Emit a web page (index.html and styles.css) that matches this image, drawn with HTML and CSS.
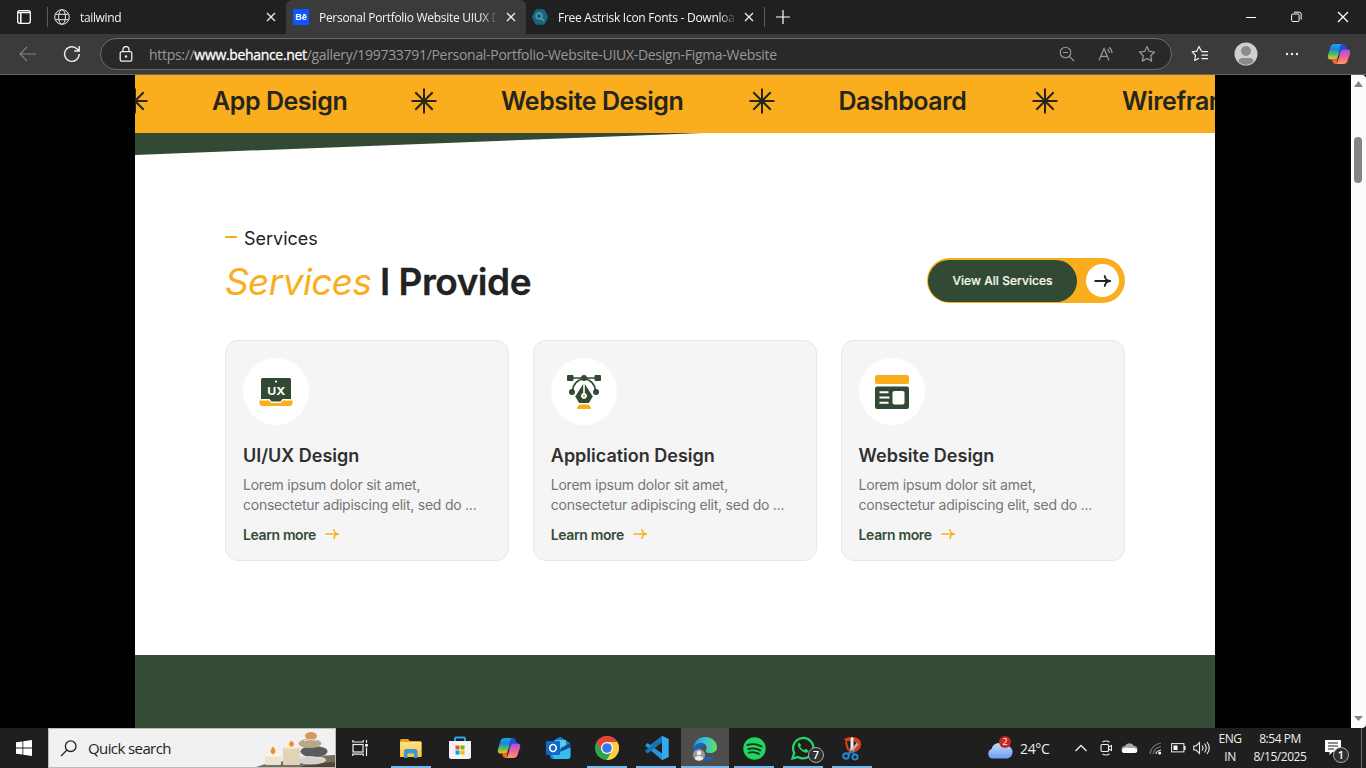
FILE: index.html
```html
<!DOCTYPE html>
<html lang="en">
<head>
<meta charset="utf-8">
<title>Personal Portfolio Website UIUX Design</title>
<link rel="stylesheet" href="styles.css">
</head>
<body>
<svg width="0" height="0" class="defs">
  <defs>
    <linearGradient id="cpA" x1="0" y1="0" x2="0" y2="1"><stop offset="0" stop-color="#1aa5f0"/><stop offset=".35" stop-color="#1b86d8"/><stop offset=".65" stop-color="#52b86a"/><stop offset="1" stop-color="#f5c51b"/></linearGradient>
    <linearGradient id="cpB" x1="0" y1="0" x2="0" y2="1"><stop offset="0" stop-color="#a44ff0"/><stop offset=".5" stop-color="#ee5f9b"/><stop offset="1" stop-color="#ff9a5c"/></linearGradient>
    <linearGradient id="edgeG" x1="0" y1="0" x2="1" y2="0"><stop offset="0" stop-color="#2392dd"/><stop offset=".5" stop-color="#35c1df"/><stop offset="1" stop-color="#6be04f"/></linearGradient>
    <linearGradient id="cloudG" x1="0" y1="0" x2="0" y2="1"><stop offset="0" stop-color="#c3dcff"/><stop offset="1" stop-color="#6c9df0"/></linearGradient>
    <linearGradient id="folderG" x1="0" y1="0" x2="0" y2="1"><stop offset="0" stop-color="#ffe08a"/><stop offset="1" stop-color="#fcc537"/></linearGradient>
    <symbol id="x" viewBox="0 0 10 10"><path d="M1 1l8 8M9 1L1 9" stroke="#eee" stroke-width="1.3" fill="none"/></symbol>
    <symbol id="copilot" viewBox="0 0 24 24">
      <path d="M15 2.5h1.5c1.2 0 1.8.8 2.1 1.8l.9 3h-4z" fill="#1747c4"/>
      <path d="M7.5 2h8.3c-1 .5-1.5 1.7-1.9 3l-3 9.500c-.6 2-1.500 3-3.400 3H3.300C1 17.500.4 15.500 1 13.300L3.500 5C4.100 3 5.500 2 7.500 2z" fill="url(#cpA)"/>
      <path d="M14 2h2c1.800 0 2.500 1.300 3 3l.8 2.600h-3c-1.800 0-2.600.7-3.100 2.400L12 15c-.6-3 .1-6 .6-8z" fill="#1d4fd0"/>
      <path d="M5 17.500h3.800c1.200-.5 1.800-1.500 2.300-3L10 19c-.4 1.900-.3 3 1 3H8.500c-1.500 0-2.500-1-3-2.800z" fill="#f06a2a"/>
      <path d="M16.500 7.500h4.200c2.300 0 2.900 2 2.300 4L20.500 19c-.6 2-2 3-4 3H9c1-.5 1.500-1.600 1.900-3l2.500-8.500c.6-2 1.500-3 3.100-3z" fill="url(#cpB)"/>
    </symbol>
    <symbol id="star" viewBox="0 0 26 26"><path d="M13 0.500V25.500M0.500 13H25.500M4.300 4.300L21.700 21.700M21.700 4.300L4.300 21.700" stroke="#26251c" stroke-width="2" fill="none"/></symbol>
    <symbol id="arrow" viewBox="0 0 16 12"><path d="M.5 6H15M9.500.8C9.500 3.500 11.500 6 15 6C11.500 6 9.500 8.500 9.500 11.200" stroke="currentColor" stroke-width="1.700" fill="none"/></symbol>
  </defs>
</svg>

<header class="tabs">
  <div class="tab-tools"><svg width="16" height="16" viewBox="0 0 16 16"><rect x="1.700" y="1.700" width="12.600" height="12.600" rx="2" fill="none" stroke="#fff" stroke-width="1.300"/><path d="M2 3.400h12M4.800 4v10" stroke="#fff" stroke-width="1.500"/></svg></div>
  <div class="tab">
    <svg class="fav" width="16" height="16" viewBox="0 0 16 16" fill="none" stroke="#e8e8e8"><circle cx="8" cy="8" r="7.300"/><ellipse cx="8" cy="8" rx="3.400" ry="7.300"/><path d="M1.500 5.300h13M1.500 10.700h13"/></svg>
    <span class="tab-title t1">tailwind</span>
    <svg width="10" height="10"><use href="#x"/></svg>
  </div>
  <div class="tab active">
    <span class="fav behance">Bē</span>
    <span class="tab-title t2">Personal Portfolio Website UIUX D</span>
    <svg width="10" height="10"><use href="#x"/></svg>
  </div>
  <div class="tab">
    <svg class="fav" width="16" height="16" viewBox="0 0 16 16"><path d="M4 .8h8l3.800 7.200L12 15.200H4L.2 8z" fill="#16677d" stroke="#16677d" stroke-linejoin="round"/><circle cx="7" cy="7" r="3" fill="none" stroke="#60a0ad" stroke-width="1.300"/><path d="M9.300 9.300l3 3" stroke="#60a0ad" stroke-width="1.500"/></svg>
    <span class="tab-title t3">Free Astrisk Icon Fonts - Downloa</span>
    <svg width="10" height="10"><use href="#x"/></svg>
  </div>
  <div class="new-tab"><svg width="14" height="14"><path d="M7 0v14M0 7h14" stroke="#fff" stroke-width="1.200"/></svg></div>
  <div class="window-controls">
    <svg width="10" height="12"><path d="M0 6.500h10" stroke="#fff"/></svg>
    <svg width="11" height="12" fill="none" stroke="#fff"><rect x=".6" y="3" width="7.500" height="7.500" rx="1.200"/><path d="M3 1.200h5.200q2 0 2 2V8.500"/></svg>
    <svg width="12" height="12"><path d="M1 1l10 10M11 1L1 11" stroke="#fff" stroke-width="1.300"/></svg>
  </div>
</header>

<nav class="toolbar">
  <svg class="back" width="18" height="16" fill="none" stroke="#818181" stroke-width="1.100"><path d="M17 8H1M8 1L1 8l7 7"/></svg>
  <svg class="reload" width="18" height="18" fill="none" stroke="#eee" stroke-width="1.400"><path d="M16.200 9A7.300 7.300 0 1 1 14.200 4L16 5.800M16.200 1v5h-5"/></svg>
  <div class="address">
    <svg width="14" height="16" fill="none" stroke="#eee" stroke-width="1.300"><rect x="1.200" y="5.700" width="11.600" height="9.500" rx="1.600"/><path d="M4 5.500V3.500a3 3 0 0 1 6 0v2"/><circle cx="7" cy="10.500" r=".6" fill="#fff"/></svg>
    <span class="url">https://<b>www.behance.net</b>/gallery/199733791/Personal-Portfolio-Website-UIUX-Design-Figma-Website</span>
    <div class="address-actions">
      <svg width="16" height="16" fill="none" stroke="#9a9a9a" stroke-width="1.100"><circle cx="6.500" cy="6.500" r="5.300"/><path d="M10.500 10.500L15 15M4 6.500h5"/></svg>
      <svg width="17" height="16" fill="none" stroke="#9a9a9a" stroke-width="1.200"><path d="M1 14.500L6 2.500l5 12M2.800 10.300h6.400M9.500 3q1.800 1.300 1.800 4M11 1.200q3 1.800 3 5.800"/></svg>
      <svg width="18" height="18" fill="none" stroke="#9a9a9a" stroke-width="1.200" stroke-linejoin="round"><path d="M9 1.500l2.300 4.900 5.300.7-3.900 3.700 1 5.300L9 13.500l-4.700 2.600 1-5.300L1.400 7.100l5.300-.7z"/></svg>
    </div>
  </div>
  <svg class="favorites" width="18" height="18" fill="none" stroke="#f2f2f2" stroke-width="1.200" stroke-linejoin="round"><path d="M10.500 6.300L8 1.500 5.800 6.200l-4.600.6 3.300 3.500-.8 5.200L8 13.200M10.500 6.700H17M10.500 10.200H17M10.500 13.700H17"/></svg>
  <svg class="profile" width="24" height="24"><circle cx="12" cy="12" r="11.500" fill="#d2d0ce"/><circle cx="12" cy="9" r="5" fill="#8d8b89"/><path d="M4.500 20q0-4 4-4h7q4 0 4 4-7.500 6-15 0z" fill="#8d8b89"/></svg>
  <svg class="more" width="14" height="4" fill="#eee"><circle cx="2" cy="2" r="1.200"/><circle cx="7" cy="2" r="1.200"/><circle cx="12" cy="2" r="1.200"/></svg>
  <svg class="cop" width="24" height="24"><use href="#copilot"/></svg>
</nav>

<main class="viewport">
  <div class="page">
    <div class="marquee">
      <svg width="26" height="26"><use href="#star"/></svg>
      <span class="m1">App Design</span>
      <svg width="26" height="26"><use href="#star"/></svg>
      <span class="m2">Website Design</span>
      <svg width="26" height="26"><use href="#star"/></svg>
      <span class="m3">Dashboard</span>
      <svg width="26" height="26"><use href="#star"/></svg>
      <span class="m4">Wirefram</span>
    </div>
    <svg class="slant" width="1080" height="24"><path d="M0 0H568L0 22z" fill="#324a33"/></svg>
    <section class="services">
      <div class="eyebrow"><i></i><span>Services</span></div>
      <div class="heading-row">
        <h1><em>Services</em><span>I Provide</span></h1>
        <div class="cta">
          <span class="cta-label">View All Services</span>
          <span class="cta-arrow"><svg width="18" height="14" viewBox="0 0 16 12"><use href="#arrow"/></svg></span>
        </div>
      </div>
      <div class="cards">
        <article class="card">
          <div class="icon"><svg width="34" height="34"><path d="M3.500 3h27q1.500 0 1.500 1.500V24h-8.500l-2 2.500h-9L10.500 24H2V4.500Q2 3 3.500 3z" fill="#324a33"/><circle cx="17" cy="6.600" r="1.100" fill="#fff"/><text x="17.300" y="20" class="ux" text-anchor="middle" textLength="18" lengthAdjust="spacingAndGlyphs">UX</text><path d="M.5 25.500h9.700l2 2.500h9.600l2-2.500h9.700v2.500q0 3-3 3h-27q-3 0-3-3z" fill="#fbae1d"/></svg></div>
          <h2>UI/UX Design</h2>
          <p><span>Lorem ipsum dolor sit amet,</span><br><span>consectetur adipiscing elit, sed do ...</span></p>
          <div class="more-link"><span>Learn more</span><svg width="15" height="12"><use href="#arrow"/></svg></div>
        </article>
        <article class="card">
          <div class="icon"><svg width="34" height="34"><g fill="#324a33"><rect x="0" y="0" width="6.500" height="6" rx="1"/><rect x="27.500" y="0" width="6.500" height="6" rx="1"/><circle cx="17" cy="3" r="3"/><circle cx="5" cy="17" r="3"/><circle cx="29" cy="17" r="3"/><path d="M16.200 9v9a3 3 0 1 0 1.600 0V9l8 12.500-4 6.500h-9.600l-4-6.500z"/></g><path d="M5 3h24M5.500 16C6 9 11 4 17 4s11 5 11.500 12" stroke="#324a33" stroke-width="1.600" fill="none"/><circle cx="17" cy="21" r="1.200" fill="#fbae1d"/><path d="M12.500 30h9q1.500 1 2 3.500h-13q.5-2.500 2-3.500z" fill="#fbae1d" stroke="#fbae1d" stroke-linejoin="round"/></svg></div>
          <h2>Application Design</h2>
          <p><span>Lorem ipsum dolor sit amet,</span><br><span>consectetur adipiscing elit, sed do ...</span></p>
          <div class="more-link"><span>Learn more</span><svg width="15" height="12"><use href="#arrow"/></svg></div>
        </article>
        <article class="card">
          <div class="icon"><svg width="34" height="34"><rect width="34" height="9" rx="2" fill="#fbae1d"/><rect y="11.500" width="34" height="22.500" rx="2" fill="#324a33"/><rect x="17.500" y="16" width="12" height="13.500" rx="2" fill="#fff"/><path d="M4.500 17.300h9M4.500 22.500h10M4.500 27.700h9" stroke="#fff" stroke-width="1.900"/></svg></div>
          <h2>Website Design</h2>
          <p><span>Lorem ipsum dolor sit amet,</span><br><span>consectetur adipiscing elit, sed do ...</span></p>
          <div class="more-link"><span>Learn more</span><svg width="15" height="12"><use href="#arrow"/></svg></div>
        </article>
      </div>
    </section>
    <div class="green-band"></div>
  </div>
  <div class="scrollbar">
    <svg width="9" height="6"><path d="M4.500 0L9 6H0z" fill="#858585"/></svg>
    <i></i>
    <svg width="9" height="5"><path d="M0 0h9L4.500 5z" fill="#858585"/></svg>
  </div>
</main>

<footer class="taskbar">
  <div class="start"><svg width="16" height="16" fill="#fff"><path d="M0 2.300l6.500-.9v6.200H0zM7.300 1.300L16 0v7.600H7.300zM0 8.400h6.500v6.200L0 13.700zM7.300 8.400H16V16l-8.700-1.200z"/></svg></div>
  <div class="search">
    <svg width="17" height="17" fill="none" stroke="#222" stroke-width="1.300"><circle cx="10.700" cy="6.200" r="5.300"/><path d="M7 10L1 16"/></svg>
    <span>Quick search</span>
    <svg class="stones" width="80" height="38">
      <path d="M1 38Q14 33 30 32T61 27L80 26V38z" fill="#77705f"/><path d="M44 38Q58 34 80 33v5z" fill="#514535"/>
      <rect x="28" y="18" width="17" height="18" rx="1" fill="#e2d3b8"/><rect x="10" y="26" width="16" height="10" rx="1" fill="#eee2cb"/><ellipse cx="36.500" cy="18.500" rx="8" ry="1.500" fill="#f6ebd5"/><ellipse cx="18" cy="26.500" rx="8" ry="1.500" fill="#fff4df"/>
      <path d="M36.500 11.500q5 4.500 0 6.500-5-2 0-6.500M18 17.500q5 5.500 0 8-5-2.500 0-8" fill="#f28a2e"/>
      <ellipse cx="56" cy="31" rx="15" ry="4.500" fill="#d3d0cd"/><ellipse cx="59" cy="22.500" rx="13.500" ry="5.500" fill="#5b5b5d"/><ellipse cx="55" cy="14.500" rx="11.500" ry="4.500" fill="#b8a88b"/><ellipse cx="56" cy="7" rx="6" ry="4" fill="#d49a5b"/>
      <path d="M49 12q8-3 13 0M43 29q12-3 23 0" stroke="#eee2cf" fill="none"/>
    </svg>
  </div>
  <div class="app taskview"><svg width="17" height="16" fill="none" stroke="#eee" stroke-width="1.200"><rect x="1" y="4.500" width="10" height="7.500"/><path d="M.8 0v2h10.400V0M.8 16v-1.800h10.400V16M14.500 0v3M14.500 7.500V16"/><rect x="13.200" y="4" width="2.600" height="2.600" fill="#fff" stroke="none"/></svg></div>
  <div class="app open"><svg width="24" height="24"><path d="M1 4.500Q1 3 2.500 3H9l2 2h10q1.500 0 1.500 1.500V21h-21z" fill="#e8a412"/><path d="M1 6h21.500v13.500q0 1.500-1.500 1.500H1z" fill="url(#folderG)"/><path d="M5 22v-6.500Q5 13 7.500 13h8.500q2.500 0 2.500 2.500V22H15v-4.500H8.500V22z" fill="#3996d8"/></svg></div>
  <div class="app"><svg width="24" height="24"><path d="M7 6V2.500Q7 1.500 8 1.500h8q1 0 1 1V6" fill="none" stroke="#27a9e8" stroke-width="2"/><path d="M1 5h22v15.500q0 2.500-2.500 2.500h-17Q1 23 1 20.500z" fill="#f3f3f3"/><path d="M7.500 9.500h4v4h-4z" fill="#f25022"/><path d="M12.500 9.500h4v4h-4z" fill="#7fba00"/><path d="M7.500 14.500h4v4h-4z" fill="#00a4ef"/><path d="M12.500 14.500h4v4h-4z" fill="#ffb900"/></svg></div>
  <div class="app"><svg width="24" height="24"><use href="#copilot"/></svg></div>
  <div class="app"><svg width="25" height="24"><path d="M4 7L14 .8 24 7v13q0 3-3 3H7q-3 0-3-3z" fill="#1482d4"/><path d="M9 4h11v12H9z" fill="#5ac5ef"/><path d="M15 12l9.500-5v13q0 3-3 3H11z" fill="#134b9b"/><path d="M6 19l18.500-7.500V20q0 3-3 3H8z" fill="#35bdf0"/><rect x="0" y="5" width="14" height="14" rx="1" fill="#0f69c9"/><ellipse cx="7" cy="12" rx="3.200" ry="3.500" fill="none" stroke="#fff" stroke-width="1.700"/></svg></div>
  <div class="app open"><svg width="24" height="24"><circle cx="12" cy="12" r="12" fill="#2da44e"/><path d="M1.600 6A12 12 0 0 1 22.400 6H12L7 15z" fill="#ea4335"/><path d="M12 6h10.400A12 12 0 0 1 11.500 24L17 15z" fill="#ffcd42"/><circle cx="12" cy="12" r="6" fill="#fff"/><circle cx="12" cy="12" r="4.800" fill="#3778e8"/></svg></div>
  <div class="app open"><svg width="25" height="24"><path d="M18 0l6.500 3v18L18 24 1 9.500 3.500 7l3 2z" fill="#2596dc"/><path d="M18 0L1 15l2.500 2.500L18 6.500z" fill="#1474b8"/><path d="M18 6.500v11L10.500 12z" fill="#202020"/><path d="M18 0l6.500 3v18L18 24z" fill="#35a9ef"/></svg></div>
  <div class="app open current"><svg width="26" height="25"><path d="M1 14C2 5 7 1 13 1c7 0 12 5 12 10 0 4-3 6-7 6-3 0-5-1-4-3 2-4-1-7-5-7-4 0-7 3-8 7z" fill="url(#edgeG)"/><path d="M1 13c2-5 8-7 11-4-4 2-4 8 0 11 3 2 7 2 11-1-2 4-6 6-10 6C6 25 1 20 1 13z" fill="#1466b2"/><circle cx="7" cy="19" r="6" fill="#999"/><circle cx="7" cy="17" r="2.300" fill="#eee"/><path d="M3 23q0-3 4-3t4 3q-4 3-8 0z" fill="#eee"/></svg></div>
  <div class="app open"><svg width="23" height="23"><circle cx="11.500" cy="11.500" r="11.200" fill="#1ed760"/><path d="M4.500 8q7-2.200 14 1.300M5.300 12q6-1.800 12 1.300M6 15.700q5-1.500 10 1.200" fill="none" stroke="#1d2b21" stroke-width="1.900" stroke-linecap="round"/></svg></div>
  <div class="app open whatsapp"><svg width="24" height="24"><path d="M1.500 22.500l1.700-5.700A10.200 10.200 0 1 1 7 20.900z" fill="none" stroke="#25d366" stroke-width="2.300"/><path d="M8 6.500c-3 2 0 6 3 8.500 3 2.300 6 2.500 6.500-.5l-3-1.700-1.500 1.500c-2-1-3-2.200-3.800-3.800l1-1.500z" fill="#25d366"/></svg><b class="badge">7</b></div>
  <div class="app open"><svg width="22" height="25"><path d="M3 3C8-.5 19 0 20 7c.5 5-3 9-8 9l-5-1 1.500-3C14 13 16 10 15 7 13 3.500 8 4 5 6z" fill="#d84316"/><path d="M5 6l2 8" stroke="#d84316" stroke-width="2"/><path d="M10.500 1l2 1v15h-3V3z" fill="#eee"/><path d="M16.500 7.500L8 18" stroke="#b8b8b8" stroke-width="2.400"/><path d="M11 15l-4 4M11 15l3 4" stroke="#1a77bd" stroke-width="2"/><circle cx="5" cy="20" r="2.800" fill="none" stroke="#2587cf" stroke-width="2"/><circle cx="14" cy="21" r="2.600" fill="none" stroke="#2587cf" stroke-width="2"/></svg></div>
  <div class="weather"><svg width="26" height="24"><path d="M5 22.500a5 5 0 0 1-.5-9.500A8 8 0 0 1 18 9.500a6.500 6.500 0 0 1 2 13z" fill="url(#cloudG)"/></svg><b class="alert">2</b><span>24°C</span></div>
  <div class="tray">
    <svg class="chev" width="12" height="8"><path d="M.5 7L6 1.500 11.500 7" fill="none" stroke="#eee" stroke-width="1.300"/></svg>
    <svg class="cam" width="12" height="16" fill="none" stroke="#eee" stroke-width="1.100"><rect x="1" y="4.500" width="7.500" height="7" rx="1"/><path d="M8.500 7l3-1.500v5l-3-1.500M2.500 2q3.500-2 7 0M2.500 14q3.500 2 7 0"/></svg>
    <svg class="cloud" width="17" height="12"><path d="M4 11a3.500 3.500 0 0 1 0-7A5 5 0 0 1 13 4a3.500 3.500 0 0 1 0 7z" fill="#aaa"/><path d="M1 9q1-4 6-3l6 0q4 1 3 4-1 1-3 1H4Q1 11 1 9z" fill="#fff"/></svg>
    <svg class="wifi" width="13" height="13" fill="none" stroke="#777" stroke-width="1.200"><path d="M1 12Q2 3 12 1M4 12q1-6 8-7.500"/><path d="M7 12q0-3 5-4" stroke="#ddd"/><circle cx="10.700" cy="11" r="1.500" fill="#fff" stroke="none"/></svg>
    <svg class="battery" width="15" height="10"><rect x=".6" y=".6" width="12.300" height="8.300" fill="none" stroke="#eee"/><rect x="2.500" y="2.500" width="4" height="4.500" fill="#fff"/><path d="M13.800 3v4" stroke="#eee" stroke-width="1.500"/></svg>
    <svg class="sound" width="17" height="14" fill="none" stroke="#eee" stroke-width="1.100"><path d="M.8 5H3l3.500-3.500v11L3 9H.8zM9 4.500q2 2.500 0 5M11.500 2.500q3.500 4.500 0 9M14 1q4.500 6 0 12"/></svg>
  </div>
  <div class="lang"><span>ENG</span><span>IN</span></div>
  <div class="clock"><span>8:54 PM</span><span>8/15/2025</span></div>
  <div class="notify"><svg width="17" height="15"><path d="M0 0h16v12H7.500L4.500 15v-3H0z" fill="#fff"/><path d="M3 3h10M3 6h10M3 9h6" stroke="#222"/></svg><b class="badge">1</b></div>
</footer>
</body>
</html>
```
FILE: styles.css
```css
* { box-sizing: border-box; }
body {
  margin: 0; width: 1366px; height: 768px; overflow: hidden;
  display: flex; flex-direction: column; background: #000;
  font-family: "Open Sans", "Noto Sans", sans-serif;
}
.defs { position: absolute; }
svg { display: block; flex: none; }
span { white-space: nowrap; }

/* Tab strip */
.tabs { height: 34px; flex: none; display: flex; background: #202020; color: #f4f4f4; font-size: 12px; }
.tab-tools { width: 48px; height: 20px; margin-top: 7px; padding: 2px 16px; border-right: 1px solid #5c5c5c; }
.tab { width: 238px; display: flex; align-items: center; padding: 0 10px 0 6px; }
.tab.active { width: 240px; background: #3b3b3b; border-radius: 6px 6px 0 0; padding: 0 10px 0 7px; }
.fav { width: 16px; height: 16px; flex: none; }
.behance { background: #0a57ff; color: #fff; font: bold 9px/16px "Liberation Sans", sans-serif; text-align: center; }
.tab-title { width: 179px; margin: 0 auto 0 10px; overflow: hidden; -webkit-mask-image: linear-gradient(90deg, #000 90%, transparent); line-height: 18px; padding-top: 1px; }
.t2 { letter-spacing: -.3px; }
.t3 { letter-spacing: -.27px; }
.t1 { letter-spacing: -.35px; }
.new-tab { width: 38px; height: 20px; margin-top: 7px; padding: 3px 11px; border-left: 1px solid #5c5c5c; }
.window-controls { margin-left: auto; display: flex; align-items: center; gap: 35px; padding-right: 17px; }

/* Address bar */
.toolbar { height: 41px; flex: none; display: flex; align-items: center; background: #3b3b3b; border-bottom: 1px solid #686868; }
.back { margin-left: 19px; }
.reload { margin-left: 26px; }
.address { width: 1072px; height: 32px; margin-left: 19px; padding: 0 15px 0 18px; border: 1px solid #6b6b6b; border-radius: 16px; background: #292929; display: flex; align-items: center; }
.url { margin-left: 16px; font-size: 14px; color: #989898; letter-spacing: -.3px; }
.url b { font-weight: 400; color: #fff; -webkit-text-stroke: .3px #fff; letter-spacing: -.33px; }
.address-actions { margin-left: auto; display: flex; align-items: center; gap: 23px; }
.favorites { margin-left: 19px; }
.profile { margin-left: 25px; }
.more { margin-left: 27px; }
.cop { margin-left: 28px; }

/* Page area */
.viewport { flex: 1; min-height: 0; display: flex; background: #000; padding-left: 135px; }
.page { width: 1080px; height: 653px; background: #fff; display: flex; flex-direction: column; overflow: hidden; font-family: Inter, sans-serif; }
.marquee { height: 58px; flex: none; background: #fbae1d; display: flex; align-items: center; padding-bottom: 6px; color: #26251c; font-size: 25px; font-weight: 600; }
.marquee svg { margin: 0 64px 0 65px; }
.marquee svg:first-child { margin-left: -13px; }
.marquee span { flex: none; letter-spacing: -.45px; }
.m1 { width: 134px; }
.m2 { width: 182.500px; }
.m3 { width: 128.500px; }
.services { padding: 0 90px; flex: 1; }
.eyebrow { height: 24px; margin-top: 69px; display: flex; align-items: center; gap: 7px; font-size: 18px; color: #222; }
.eyebrow i { width: 12px; height: 2px; margin-bottom: 3px; background: #fbae1d; }
.heading-row { display: flex; justify-content: space-between; margin-top: 8px; height: 45px; align-items: center; }
h1 { margin: 2px 0 0; display: flex; font-size: 37px; line-height: 45px; font-weight: 600; color: #222; }
h1 em { width: 155px; font-weight: 400; color: #fbae1d; letter-spacing: -.6px; }
h1 span { letter-spacing: -.5px; -webkit-text-stroke: .3px #222; }
.cta { width: 198px; height: 45px; border-radius: 23px; background: #fbae1d; padding: 1px; display: flex; align-items: center; }
.cta-label { width: 149px; height: 42px; border-radius: 21px; background: #324a33; color: #f4f6f2; text-align: center; font-size: 12px; font-weight: 500; line-height: 42px; letter-spacing: .05px; -webkit-text-stroke: .2px #f4f6f2; }
.cta-arrow { width: 33px; height: 33px; margin-left: 9px; border-radius: 50%; background: #fff; color: #222; display: flex; align-items: center; justify-content: center; }
.cards { display: flex; gap: 23.600px; margin-top: 37px; }
.card { width: 284.200px; height: 221px; flex: none; border: 1px solid #e7e7e7; border-radius: 13px; background: #f5f5f5; padding: 17px; }
.icon { width: 66px; height: 67px; border-radius: 50%; background: #fff; display: flex; align-items: center; justify-content: center; }
.ux { font: 700 11px Inter, sans-serif; fill: #fff; }
h2 { margin: 19px 0 0; font-size: 18px; line-height: 24px; font-weight: 600; color: #303030; letter-spacing: 0; }
p { margin: 7px 0 0; font-size: 14px; line-height: 20px; color: #757575; letter-spacing: -.24px; }
.more-link { display: flex; align-items: center; margin-top: 9px; height: 20px; font-size: 14px; font-weight: 600; color: #344c36; }
.more-link span { width: 82px; letter-spacing: -.38px; }
.more-link svg { color: #fbae1d; }
.green-band { height: 73px; flex: none; background: #344b35; }
.scrollbar { width: 15px; margin-left: auto; background: #fcfcfc; display: flex; flex-direction: column; align-items: center; padding: 6px 1px 7px 0; border-radius: 0 4px 4px 0; }
.scrollbar i { width: 8px; height: 46px; margin-top: 50px; border-radius: 4px; background: #858585; }
.scrollbar svg:last-child { margin-top: auto; }

/* Taskbar */
.taskbar { height: 40px; flex: none; background: #1f1f1f; display: flex; color: #eee; }
.start { width: 48px; padding: 12px 16px; }
.search { width: 288px; height: 40px; background: #f1f1f1; border: 1px solid #bdbdbd; display: flex; align-items: center; padding-left: 11px; font-size: 15px; color: #222; }
.search span { margin-left: 11px; letter-spacing: -.6px; }
.stones { margin-left: auto; }
.app { width: 49px; height: 40px; flex: none; display: flex; align-items: center; justify-content: center; position: relative; padding-left: 1px; }
.taskview { width: 50px; padding: 0 2px 0 0; }
.open::after { content: ""; position: absolute; left: 5px; bottom: 0; width: 40px; height: 2px; background: #76b9ed; }
.current { background: #4d4d4d; background-clip: content-box; }
.current::after { left: 1px; width: 48px; }
.badge { position: absolute; display: block; width: 16px; height: 16px; border: 1px solid #aaa; border-radius: 50%; background: #303030; color: #fff; text-align: center; font: 600 11px/14px "Open Sans", sans-serif; }
.whatsapp .badge { right: 3px; bottom: 5px; }
.weather { width: 85px; margin-left: 111px; position: relative; display: flex; align-items: center; font-size: 14px; }
.weather span { margin-left: 7px; letter-spacing: -.35px; }
.alert { position: absolute; left: 12px; top: 8px; width: 12px; height: 12px; border-radius: 50%; background: #c9281f; color: #fff; font: 9px/12px "Open Sans", sans-serif; text-align: center; }
.tray { display: flex; align-items: center; margin-left: 3px; width: 140px; }
.cam { margin-left: 13px; }
.cloud { margin-left: 9px; }
.wifi { margin-left: 11px; }
.battery { margin-left: 9px; }
.sound { margin-left: 7px; }
.lang, .clock { display: flex; flex-direction: column; align-items: center; font-size: 12px; line-height: 18px; padding-top: 2px; letter-spacing: -.45px; }
.lang { width: 26px; margin-left: 2px; }
.clock { width: 74px; }
.notify { width: 37px; margin-left: auto; position: relative; border-right: 1px solid #666; margin-right: 4px; }
.notify svg { margin-top: 12px; }
.notify .badge { left: 8px; top: 19px; }
```
